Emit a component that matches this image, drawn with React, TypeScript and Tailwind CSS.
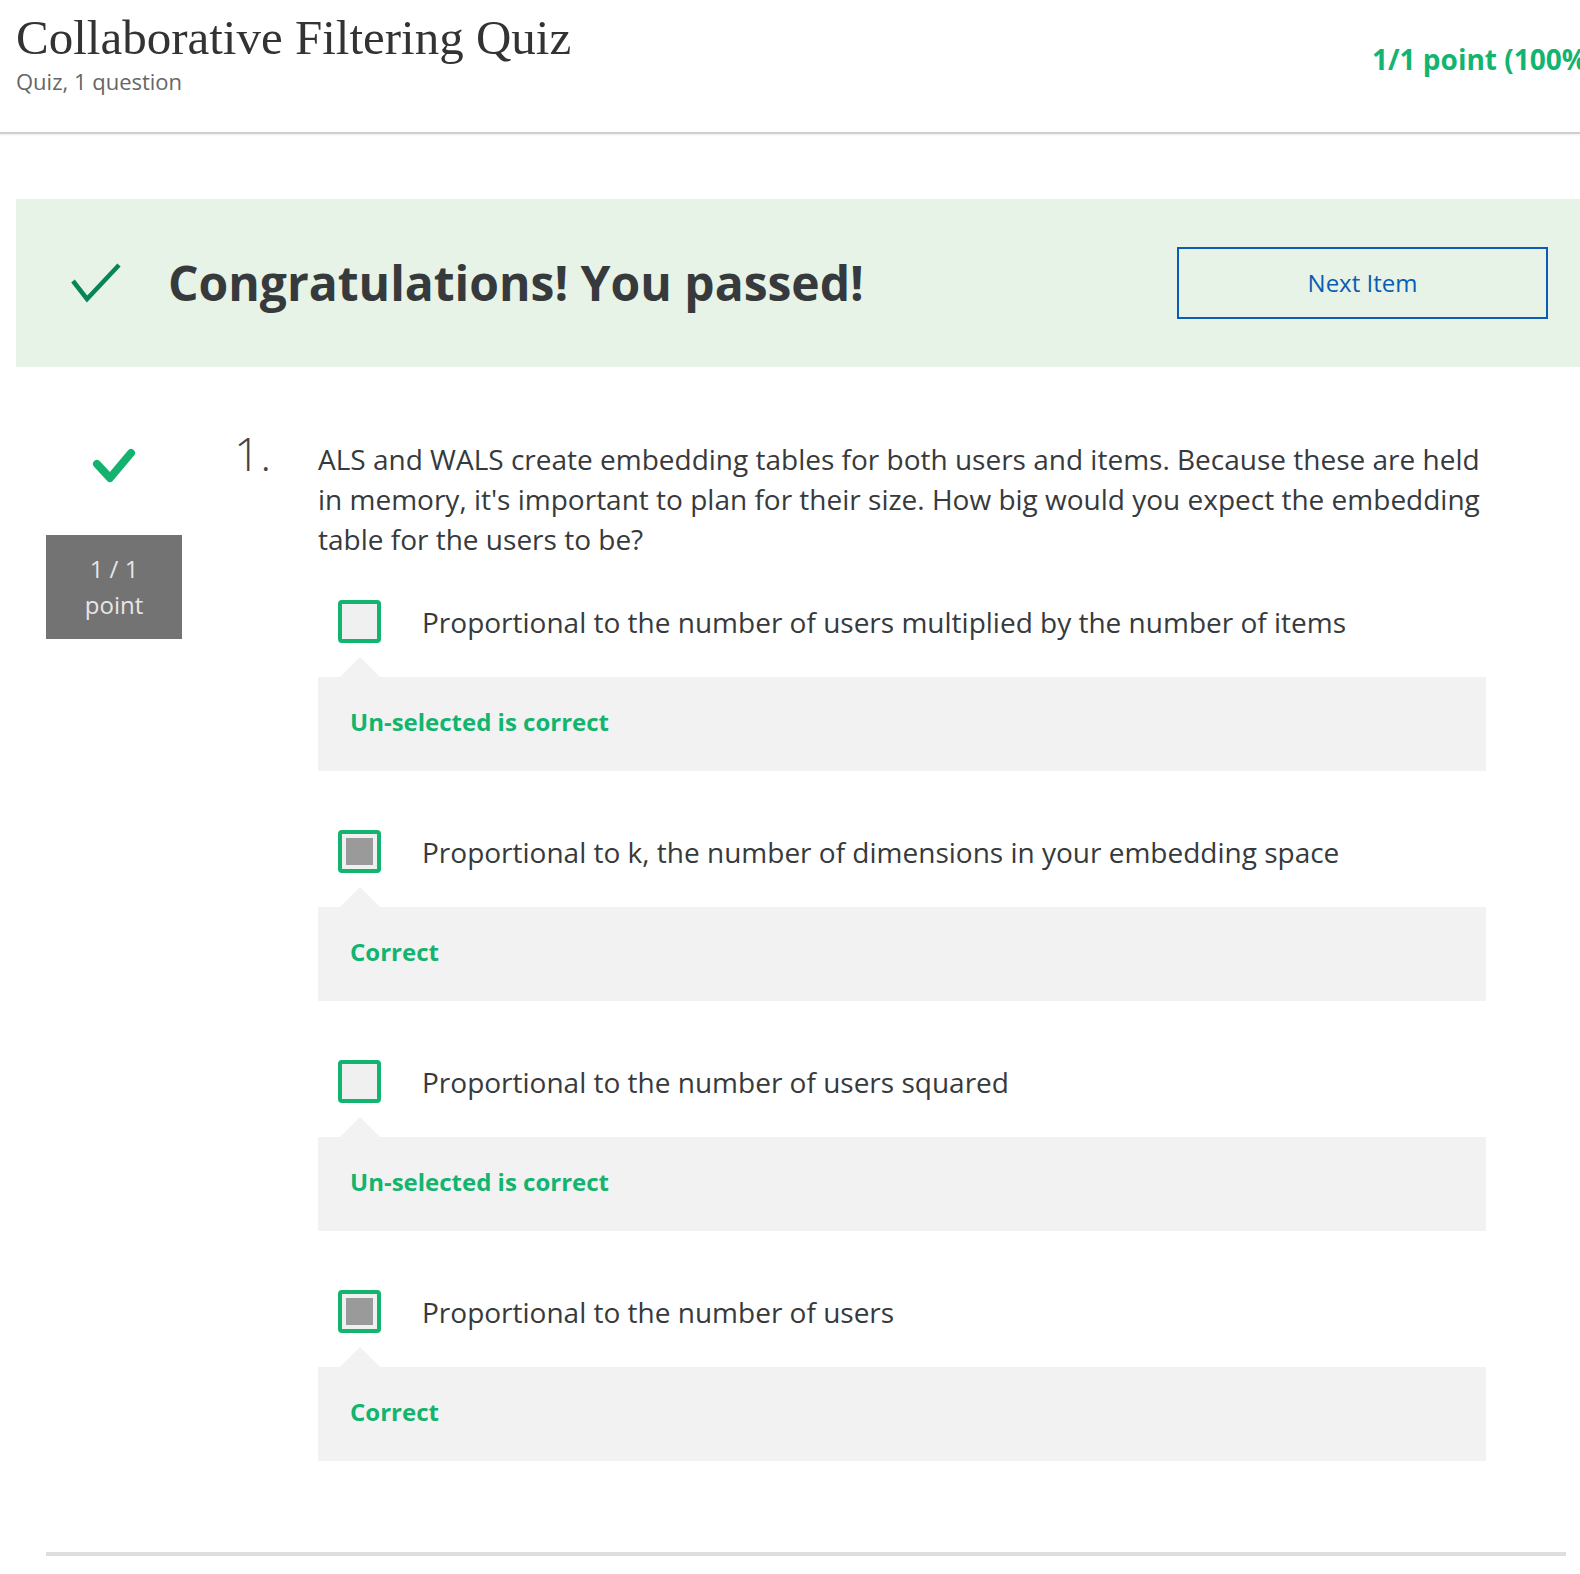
import React from "react";

type Option = { text: string; selected: boolean; feedback: string };

const options: Option[] = [
  { text: "Proportional to the number of users multiplied by the number of items", selected: false, feedback: "Un-selected is correct" },
  { text: "Proportional to k, the number of dimensions in your embedding space", selected: true, feedback: "Correct" },
  { text: "Proportional to the number of users squared", selected: false, feedback: "Un-selected is correct" },
  { text: "Proportional to the number of users", selected: true, feedback: "Correct" },
];

function OptionRow({ option }: { option: Option }) {
  return (
    <div className="mb-[59px]">
      <div className="flex items-center pl-5">
        <span className="flex h-[43px] w-[43px] shrink-0 items-center justify-center rounded-[4px] border-4 border-[#12b46f] bg-[#f0f0f0]">
          {option.selected && <span className="h-[27px] w-[27px] bg-[#9a9a9a]" />}
        </span>
        <span className="ml-[41px] text-[28px] leading-[40px]">{option.text}</span>
      </div>
      <div className="relative mt-[34px] flex h-[94px] items-center bg-[#f2f2f2] px-8 pb-[4px]">
        <span className="absolute -top-[20px] left-[22px] h-0 w-0 border-x-[20px] border-b-[20px] border-x-transparent border-b-[#f2f2f2]" />
        <span className="text-[24px] font-bold text-[#12b46f]">{option.feedback}</span>
      </div>
    </div>
  );
}

export default function App() {
  return (
    <div className="relative h-[1574px] w-[1580px] overflow-hidden bg-white font-['Open_Sans',sans-serif] text-[#373a3c]">
      <header className="flex h-[134px] justify-between border-b-2 border-[#cfcfcf] pl-4 shadow-[0_1px_2px_rgba(0,0,0,0.08)]">
        <div className="pt-[10px]">
          <h1 className="font-['Liberation_Serif',serif] text-[49px] leading-[56px] text-[#333]">Collaborative Filtering Quiz</h1>
          <p className="mt-[1px] text-[22px] leading-[28px] text-[#666]">Quiz, 1 question</p>
        </div>
        <div className="w-[208px] shrink-0 whitespace-nowrap pt-[38px] text-[28px] font-bold text-[#12b46f]">1/1 point (100%)</div>
      </header>

      <section className="ml-4 mt-[65px] flex h-[168px] items-center bg-[#e7f3e6] pr-[32px]">
        <svg width="56" height="44" viewBox="0 0 56 44" className="ml-[54px] shrink-0">
          <polyline points="3,20 17,38 49,4" fill="none" stroke="#078558" strokeWidth="4.5" />
        </svg>
        <h2 className="ml-[42px] flex-1 text-[48px] font-bold text-[#373a3c]">Congratulations! You passed!</h2>
        <button className="h-[72px] w-[371px] border-2 border-[#0b5cb3] text-[24px] text-[#0b5cb3]">Next Item</button>
      </section>

      <main className="mt-[64px] flex pl-[46px]">
        <div className="flex w-[136px] shrink-0 flex-col items-center">
          <svg width="48" height="40" viewBox="0 0 48 40" className="mt-[14px]">
            <polyline points="7,19 20,33 41,8" fill="none" stroke="#13b26f" strokeWidth="8" strokeLinecap="round" strokeLinejoin="round" />
          </svg>
          <div className="mt-[50px] flex h-[104px] w-[136px] flex-col items-center justify-center bg-[#737373] text-[24px] leading-[36px] text-[#e6e6e6]">
            <span>1 / 1</span>
            <span>point</span>
          </div>
        </div>
        <div className="w-[52px] shrink-0" />
        <div className="w-[84px] shrink-0 text-[46px] font-light leading-[44px] text-[#444]">1.</div>
        <div className="w-[1168px] shrink-0 pt-[8px]">
          <p className="pr-1 text-[28px] leading-[40px]">
            ALS and WALS create embedding tables for both users and items. Because these are held in memory, it's important to plan for their size. How big would you expect the embedding table for the users to be?
          </p>
          <div className="mt-[41px]">
            {options.map((o) => (
              <OptionRow key={o.text} option={o} />
            ))}
          </div>
        </div>
      </main>

      <div className="absolute left-[46px] top-[1552px] h-[4px] w-[1520px] bg-[#dedede]" />
    </div>
  );
}
